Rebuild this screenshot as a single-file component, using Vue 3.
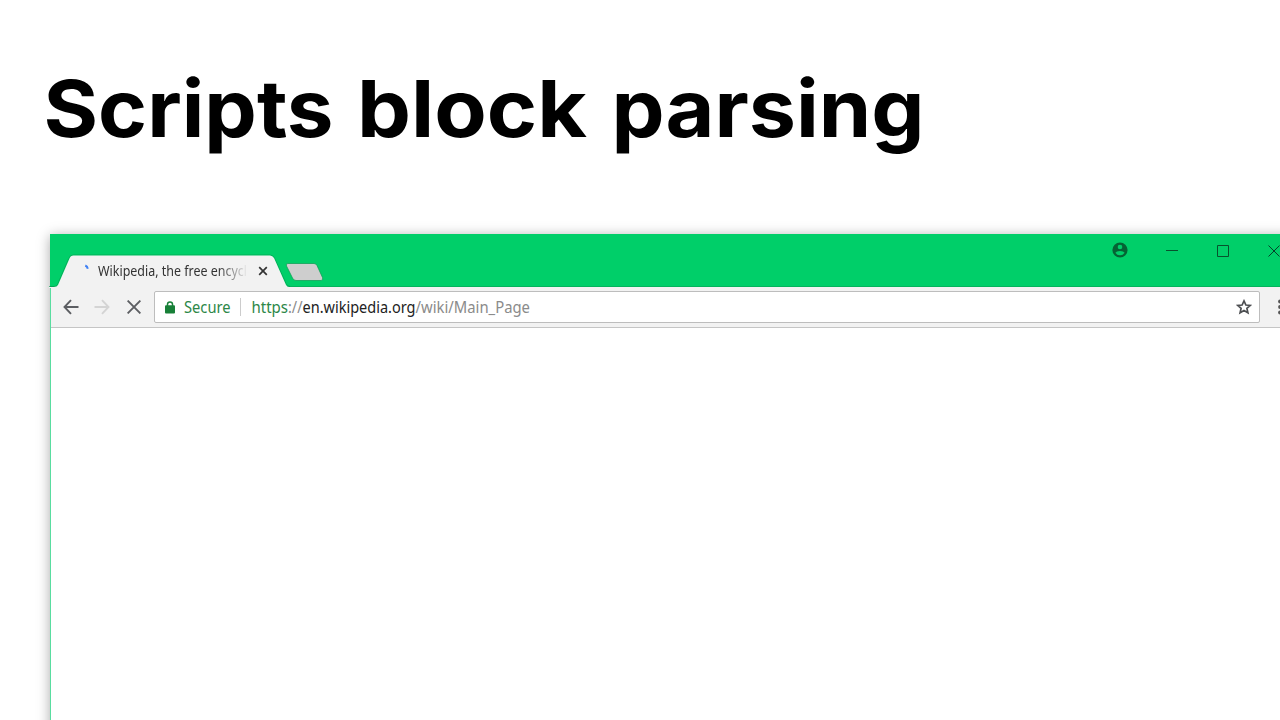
<script setup>
const words = [
  { text: 'Scripts', x: 43.5, width: 290 },
  { text: 'block', x: 357, width: 230 },
  { text: 'parsing', x: 611.5, width: 313 },
]
</script>

<template>
  <main class="slide">
    <h1 class="title">
      <svg width="1000" height="120" role="img">
        <text v-for="w in words" :key="w.text" :x="w.x" y="77" :textLength="w.width" lengthAdjust="spacingAndGlyphs">{{ w.text }}</text>
      </svg>
    </h1>

    <section class="window">
      <header class="titlebar">
        <div class="tabs">
          <div class="tab">
            <svg class="tab-shape" width="242" height="34">
              <path d="M0 32.5H5Q7.500 32.500 8.500 30.500L19.500 5Q21 1 24 1H221Q224 1 225.500 4L237 29.500Q238.500 32.500 241 32.500" fill="none" stroke="#079d50" stroke-opacity=".65" />
              <path d="M0 34V33H5Q8 33 9 31L20.500 4.500Q21.500 1.500 24.500 1.500H221Q223.500 1.500 225 4L237 31Q238 33 240 33H242V34Z" fill="#f2f2f2" />
            </svg>
            <svg class="spinner" width="6" height="7" viewBox="0 0 6 7"><path d="M1.300 1.500Q3.400 2.500 3.800 4.700" fill="none" stroke="#3f80f4" stroke-width="2" /></svg>
            <svg class="tab-title" width="150" height="24"><text x="0" y="16" textLength="149" lengthAdjust="spacingAndGlyphs">Wikipedia, the free encycl</text></svg>
            <svg class="tab-close" width="10" height="10" viewBox="0 0 10 10"><path d="M1.200 1.200l7.600 7.600M8.800 1.200L1.200 8.800" stroke="#333" stroke-width="1.700" /></svg>
          </div>
          <svg class="new-tab" width="40" height="21"><path d="M3 1.500H29Q31 1.500 32 3.500L37.500 15.500Q38.500 18.500 36 18.500H11Q8.500 18.500 7.500 16L1.500 4Q.5 1.500 3 1.500Z" fill="#cecece" stroke="#079d50" stroke-opacity=".7" /></svg>
        </div>
        <div class="controls">
          <svg class="user" width="16" height="16" viewBox="0 0 16 16"><circle cx="8" cy="8" r="7.600" fill="#056334" /><circle cx="8" cy="5" r="2.300" fill="#00cf69" /><path d="M3.400 10.700Q4.300 8.900 8 8.900T12.600 10.700Q11 13.200 8 13.200T3.400 10.700Z" fill="#00cf69" /></svg>
          <svg class="minimize" width="12" height="12"><path d="M0 5.500H12" stroke="#07522d" /></svg>
          <svg class="maximize" width="12" height="12"><path d="M.5.5H11.500V11.500H.5Z" fill="none" stroke="#07522d" /></svg>
          <svg class="close" width="12" height="12"><path d="M.5.5L11.500 11.500M11.500.5L.5 11.500" stroke="#06402a" /></svg>
        </div>
      </header>

      <div class="toolbar">
        <svg class="back" width="16" height="16" viewBox="0 0 16 16"><path d="M15.500 8H2M8 1.200L1.500 8L8 14.800" fill="none" stroke="#5c5e62" stroke-width="1.900" /></svg>
        <svg class="forward" width="16" height="16" viewBox="0 0 16 16"><path d="M.5 8H14M8 1.200L14.500 8L8 14.800" fill="none" stroke="#d4d4d4" stroke-width="1.900" /></svg>
        <svg class="stop" width="14" height="14" viewBox="0 0 14 14"><path d="M.6.600L13.400 13.400M13.400.6L.6 13.400" stroke="#5c5e62" stroke-width="1.900" /></svg>
        <div class="omnibox">
          <svg class="lock" width="10" height="13" viewBox="0 0 10 13"><path d="M2.500 5V3.300Q2.500 1 5 1T7.500 3.300V5" fill="none" stroke="#188038" stroke-width="1.500" /><rect y="4.200" width="10" height="8.300" rx="1" fill="#188038" /></svg>
          <svg class="secure" width="48" height="28"><text x="0" y="20" textLength="46.500" lengthAdjust="spacingAndGlyphs">Secure</text></svg>
          <span class="divider"></span>
          <svg class="url" width="290" height="28">
            <text class="scheme" x="0.5" y="20" textLength="36.500" lengthAdjust="spacingAndGlyphs">https</text>
            <text class="muted" x="37" y="20" textLength="14.500" lengthAdjust="spacingAndGlyphs">://</text>
            <text class="host" x="51.5" y="20" textLength="113" lengthAdjust="spacingAndGlyphs">en.wikipedia.org</text>
            <text class="muted" x="164.5" y="20" textLength="114.500" lengthAdjust="spacingAndGlyphs">/wiki/Main_Page</text>
          </svg>
          <svg class="star" width="16" height="16" viewBox="0 0 16 16"><path d="M8 1.900L9.900 6L14.300 6.400L10.900 9.300L11.900 13.800L8 11.500L4.100 13.800L5.100 9.300L1.700 6.400L6.100 6Z" fill="none" stroke="#4d4f52" stroke-width="1.700" /></svg>
        </div>
        <svg class="menu" width="4" height="16"><g fill="#555"><circle cx="2" cy="2.500" r="1.900" /><circle cx="2" cy="8" r="1.900" /><circle cx="2" cy="13.500" r="1.900" /></g></svg>
      </div>
      <div class="page"></div>
    </section>
  </main>
</template>

<style>
body { margin: 0; background: #fff; overflow: hidden; }
</style>

<style scoped>
.slide { width: 1280px; height: 720px; overflow: hidden; background: #fff; box-sizing: border-box; padding-top: 60px; }
.slide svg { display: block; flex: none; }
.title { margin: 0; height: 174px; font: 700 79px Inter, sans-serif; }
.title text { fill: #000; }
.window { margin-left: 50px; width: 1270px; height: 550px; box-sizing: border-box; border-left: 1px solid #59dda0; box-shadow: 0 2px 12px rgba(0, 0, 0, .34); background: #fff; }
.titlebar { height: 53px; margin-left: -1px; background: #00cf69; box-shadow: inset 0 -1px #05b35d; display: flex; }
.tabs { display: flex; align-items: flex-end; }
.tab { position: relative; width: 234px; height: 33px; display: flex; align-items: flex-start; }
.tab-shape { position: absolute; left: -1px; top: 0; }
.spinner { position: relative; margin: 10px 0 0 34px; }
.tab-title { position: relative; margin: 6px 0 0 8px; font: 13.5px "Noto Sans", sans-serif; overflow: visible; -webkit-mask-image: linear-gradient(90deg, #000 80%, transparent 100%); mask-image: linear-gradient(90deg, #000 80%, transparent 100%); }
.tab-title text { fill: #333; }
.tab-close { position: relative; margin: 12px 0 0 10px; }
.new-tab { margin: 0 0 4px 1px; }
.controls { margin-left: auto; display: flex; padding: 8px 40px 0 0; }
.minimize { margin: 3px 0 0 38px; }
.maximize { margin: 3px 0 0 39px; }
.close { margin: 3px 0 0 39px; }
.toolbar { height: 41px; box-sizing: border-box; background: #f2f2f2; border-bottom: 1px solid #c5c5c5; display: flex; align-items: center; padding-left: 12px; }
.forward { margin-left: 15px; }
.stop { margin-left: 16.5px; margin-right: .5px; }
.omnibox { width: 1106px; height: 32px; box-sizing: border-box; margin-left: 13px; border: 1px solid #bdbdbd; border-radius: 2px; background: #fff; display: flex; align-items: center; font: 15.5px "Noto Sans", sans-serif; }
.lock { margin: 1px 0 0 10px; }
.secure { margin-left: 9px; fill: #2d8748; }
.divider { width: 1px; height: 18px; margin-left: 8px; border-left: 1px solid #ccc; }
.url { margin-left: 9px; }
.scheme { fill: #2d8748; }
.muted { fill: #8b8b8b; }
.host { fill: #222; }
.star { margin: 0 7px 0 auto; }
.menu { margin-left: 18px; }
</style>
